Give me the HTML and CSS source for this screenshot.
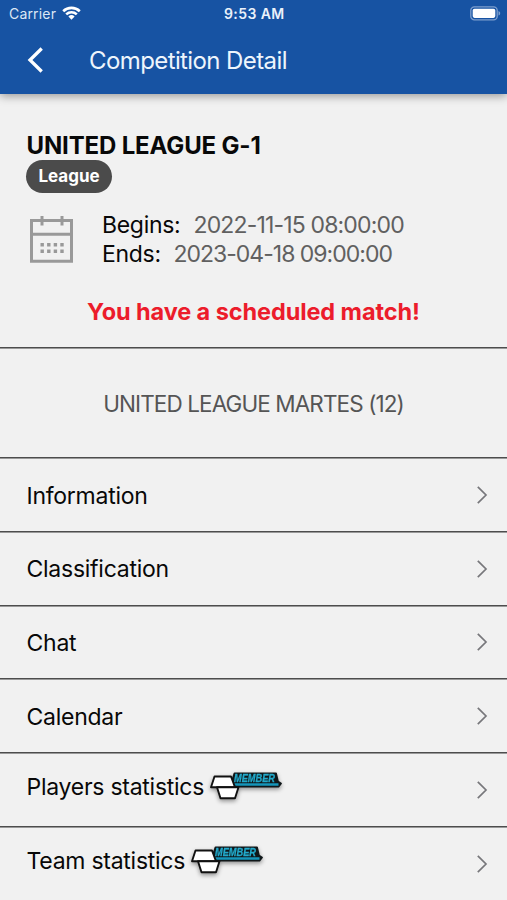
FILE: index.html
```html
<!DOCTYPE html>
<html lang="en">
<head>
<meta charset="utf-8">
<title>Competition Detail</title>
<link rel="stylesheet" href="styles.css">
</head>
<body>
<svg class="defs" width="0" height="0" aria-hidden="true">
  <symbol id="chevron" viewBox="0 0 12 20"><path d="M1.800 1.800 10 10l-8.200 8.200" fill="none" stroke="#77777b" stroke-width="1.700"/></symbol>
  <symbol id="member" viewBox="0 0 78 38">
    <path d="M24.500 8.500 26.500 2.300h41.500l2 8.300 3 1.800-2.500 3.200H26z" fill="#101719" stroke="#101719" stroke-width="1.800" stroke-linejoin="round"/>
    <path d="M25.500 13.500h45" stroke="#1596ba" stroke-width="2.600" fill="none"/>
    <path d="M6.500 5.500h16.500l4 10.700H3z" fill="#fff" stroke="#111" stroke-width="1.900" stroke-linejoin="round"/>
    <path d="M9 16.200h21.500l-3.500 11H12.500z" fill="#fff" stroke="#111" stroke-width="1.900" stroke-linejoin="round"/>
  </symbol>
</svg>
<header class="header">
  <div class="status">
    <span class="carrier">Carrier</span>
    <svg class="wifi" width="19" height="14" viewBox="0 0 19 14"><g fill="none" stroke="#fff" stroke-width="2.600"><path d="M1.200 5.200a12 12 0 0 1 16.600 0M4.200 8.400a7.700 7.700 0 0 1 10.600 0"/></g><path d="M6.400 10.500a4.600 4.600 0 0 1 6.200 0L9.500 13.700z" fill="#fff"/></svg>
    <span class="time">9:53 AM</span>
    <svg class="battery" width="31" height="15" viewBox="0 0 31 15"><rect x=".8" y=".8" width="26.400" height="13" rx="3.600" fill="none" stroke="#7e9fce" stroke-width="1.300"/><rect x="2.700" y="2.700" width="22.600" height="9.200" rx="1.800" fill="#fff"/><path d="M28.500 5v4.600c2.300-.8 2.300-3.800 0-4.600" fill="#7e9fce"/></svg>
  </div>
  <div class="nav">
    <svg class="back" width="18" height="28" viewBox="0 0 18 28"><path d="M15.700 2.500 4 14l11.700 11.500" fill="none" stroke="#fff" stroke-width="3.300"/></svg>
    <h1 class="nav-title">Competition Detail</h1>
  </div>
</header>
<main>
  <section class="summary">
    <h2 class="name">UNITED LEAGUE G-1</h2>
    <span class="badge">League</span>
    <div class="schedule">
      <svg class="calendar" width="46" height="50" viewBox="0 0 46 50"><g fill="none" stroke="#999" stroke-width="3"><path d="M2.500 4.500h40v40.800h-40zM2.500 18.300h40"/><path d="M13 0v9.500M33 0v9.500"/></g><g fill="#999"><path d="M11.500 27h3.400v3.400h-3.400zM18.100 27h3.400v3.400h-3.400zM24.700 27h3.400v3.400h-3.400zM31.300 27h3.400v3.400h-3.400zM11.500 33.500h3.400v3.400h-3.400zM18.100 33.500h3.400v3.400h-3.400zM24.700 33.500h3.400v3.400h-3.400zM31.300 33.500h3.400v3.400h-3.400z"/></g></svg>
      <div class="dates">
        <div class="date"><span class="label begins">Begins:</span><span class="value start">2022-11-15 08:00:00</span></div>
        <div class="date"><span class="label ends">Ends:</span><span class="value end">2023-04-18 09:00:00</span></div>
      </div>
    </div>
    <p class="alert">You have a scheduled match!</p>
  </section>
  <section class="group"><span class="group-name">UNITED LEAGUE MARTES (12)</span></section>
  <nav class="menu">
    <a class="row"><span class="text">Information</span><svg class="chevron"><use href="#chevron"/></svg></a>
    <a class="row"><span class="text">Classification</span><svg class="chevron"><use href="#chevron"/></svg></a>
    <a class="row"><span class="text">Chat</span><svg class="chevron"><use href="#chevron"/></svg></a>
    <a class="row"><span class="text">Calendar</span><svg class="chevron"><use href="#chevron"/></svg></a>
    <a class="row with-member"><span class="text">Players statistics</span><svg class="member" viewBox="0 0 78 38"><use href="#member"/><text x="26" y="11" textLength="41" lengthAdjust="spacingAndGlyphs" class="member-text">MEMBER</text></svg><svg class="chevron"><use href="#chevron"/></svg></a>
    <a class="row with-member"><span class="text">Team statistics</span><svg class="member" viewBox="0 0 78 38"><use href="#member"/><text x="26" y="11" textLength="41" lengthAdjust="spacingAndGlyphs" class="member-text">MEMBER</text></svg><svg class="chevron"><use href="#chevron"/></svg></a>
  </nav>
</main>
</body>
</html>
```
FILE: styles.css
```css
* { box-sizing: border-box; }
body {
  margin: 0;
  height: 900px;
  overflow: hidden;
  background: #f1f1f1;
  color: #080808;
  font-family: Inter, "Liberation Sans", sans-serif;
  font-size: 23px;
  line-height: 29px;
}
h1, h2, p { margin: 0; font-size: inherit; }
svg { display: block; flex: none; }
.defs { position: absolute; }
.header {
  height: 94px;
  background: #1753a3;
  color: #fff;
  box-shadow: 0 2px 9px rgba(0, 0, 0, .38);
}
.status {
  display: grid;
  grid-template-columns: 53px 162px 1fr 37px;
  align-items: center;
  height: 27px;
  padding-left: 9px;
  font-size: 14px;
  line-height: 27px;
}
.carrier { color: #dce7f5; letter-spacing: .18px; }
.time { font-size: 14px; font-weight: 600; letter-spacing: .4px; color: #eaf1fa; }
.time, .carrier { white-space: nowrap; }
.wifi { margin-top: -1px; }
.nav { display: flex; align-items: center; height: 66px; padding-left: 26px; }
.nav-title { margin-left: 45px; font-size: 24px; font-weight: 400; letter-spacing: -.6px; color: #eef5fc; }
.summary { height: 253px; padding: 37px 26px 0; }
.name { font-size: 24px; font-weight: 700; letter-spacing: -.15px; margin-left: .5px; }
.badge {
  display: block;
  width: 86px;
  height: 33px;
  border-radius: 17px;
  background: #4b4b4b;
  color: #fff;
  font-size: 17px;
  font-weight: 700;
  line-height: 33px;
  text-align: center;
}
.schedule { display: flex; margin-top: 18px; }
.calendar { margin: 5px 0 0 3px; }
.dates { margin-left: 27px; }
.date { display: flex; white-space: nowrap; }
.label { letter-spacing: -.3px; }
.begins { width: 91.500px; }
.ends { width: 71.500px; }
.value { color: #606060; }
.start { letter-spacing: -.84px; }
.end { letter-spacing: -1px; }
.alert { margin: 28px -10px 0; text-align: center; color: #ec1c2b; font-size: 23.500px; font-weight: 700; letter-spacing: -.090px; }
.group, .row {
  border-top: 1px solid #4d4d4d;
  box-shadow: inset 0 1px #999;
}
.group { display: flex; align-items: center; justify-content: center; height: 110px; padding-top: 2px; color: #555; }
.group-name { font-size: 22.500px; letter-spacing: -.9px; }
.row { display: flex; align-items: center; height: 73.800px; padding: 1px 19px 0 26.500px; }
.text { margin-top: 2.600px; letter-spacing: -.26px; white-space: nowrap; }
.chevron { width: 12px; height: 20px; margin-left: auto; }
.with-member .text { margin-top: -5px; }
.member { width: 78px; height: 38px; margin: 0 0 0 4px; filter: drop-shadow(0 2px 2px rgba(0, 0, 0, .4)); }
.member-text { font: italic 700 10.500px "Liberation Sans", sans-serif; fill: #22a9ca; stroke: #22a9ca; stroke-width: .3px; }
```
